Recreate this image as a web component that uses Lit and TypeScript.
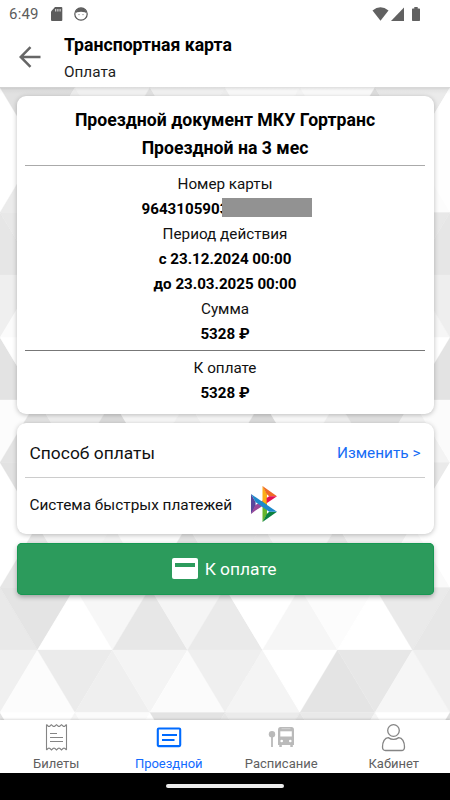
import { LitElement, html, svg, css } from "lit";
import { customElement, property } from "lit/decorators.js";

// Width, height and vertical phase of the triangle mesh.
const STEP = 75;
const ROW = 62.5;
const TOP = 87.5;

// Each row alternates pointing-up and pointing-down triangles, left to right.
const MESH: string[][] = [
  "fff e1e1e1 f0f0f0 f5f5f5 e4e4e4 f4f4f4 f1f1f1 fcfcfc f8f8f8 fdfdfd e0e0e0 ebebeb fff".split(" "),
  "fff ebebeb fff f4f4f4 eee fff eee fff f4f4f4 eee fff fcfcfc fefefe".split(" "),
  "e6e6e6 e8e8e8 eee eee eee eee eee eee eee eee eee e8e8e8 e6e6e6".split(" "),
  "efefef fbfbfb eee eee eee eee eee eee eee eee eee f6f6f6 eee".split(" "),
  "e3e3e3 fff eee eee eee eee eee eee eee eee eee fff e3e3e3".split(" "),
  "fcfcfc e4e4e4 efefef dcdcdc f8f8f8 f2f2f2 f7f7f7 dcdcdc fbfbfb f0f0f0 e2e2e2 f3f3f3 fbfbfb".split(" "),
  "fff e2e2e2 eee eee eee eee eee eee eee eee eee eaeaea fff".split(" "),
  "fff e7e7e7 f5f5f5 f2f2f2 fcfcfc e2e2e2 ebebeb ebebeb f4f4f4 e6e6e6 f0f0f0 fafafa fff".split(" "),
  "e9e9e9 e4e4e4 fff f7f7f7 e7e7e7 f5f5f5 eaeaea fff f6f6f6 fcfcfc fff eaeaea e7e7e7".split(" "),
  "f0f0f0 fcfcfc ebebeb efefef f4f4f4 fbfbfb efefef f4f4f4 fff e4e4e4 e7e7e7 f6f6f6 efefef".split(" "),
  "e2e2e2 fff f5f5f5 fbfbfb fff e3e3e3 e6e6e6 ebebeb e3e3e3 e9e9e9 f5f5f5 fff dedede".split(" "),
];

@customElement("mesh-background")
export class MeshBackground extends LitElement {
  static styles = css`
    :host { display: block; }
    svg { display: block; width: 450px; height: 633px; }
  `;
  render() {
    return html`<svg viewBox="0 87 450 633" preserveAspectRatio="none">
      ${MESH.map((row, r) =>
        row.map((c, i) => {
          const x = (i * STEP) / 2;
          const y = TOP + r * ROW;
          const up = (i + r) % 2 === 0;
          const h = STEP / 2;
          const pts = up
            ? `${x},${y} ${x + h},${y + ROW} ${x - h},${y + ROW}`
            : `${x - h},${y} ${x + h},${y} ${x},${y + ROW}`;
          return svg`<polygon points=${pts} fill="#${c}" stroke="#${c}" stroke-width="0.3"/>`;
        })
      )}
    </svg>`;
  }
}

@customElement("status-bar")
export class StatusBar extends LitElement {
  static styles = css`
    :host { display: flex; align-items: center; height: 27px; padding: 0 30px 0 9px; color: #5c5c5c; font: 400 15px/27px Roboto, sans-serif; }
    .time { width: 42px; padding-top: 1px; letter-spacing: 0.2px; }
    .gap { flex: 1; }
    svg { display: block; }
    .face { margin-left: 11px; }
    .signal { margin-left: 2px; }
    .battery { margin-left: 8px; }
  `;
  render() {
    return html`
      <span class="time">6:49</span>
      <svg width="12" height="14" viewBox="0 0 12 14"><path d="M4 0H10.3Q11.3 0 11.3 1V13Q11.3 14 10.3 14H1Q0 14 0 13V4.4Z" fill="#5c5c5c"/><path d="M4.7 2v2.5M6.9 2v2.5M9.1 2v2.5" stroke="#ddd" stroke-width="1.1"/></svg>
      <svg class="face" width="14" height="14" viewBox="0 0 14 14"><circle cx="7" cy="7" r="6.2" fill="none" stroke="#555" stroke-width="1.2"/><path d="M1.5 6.3Q2.2 1 7 1T12.5 6.3L10.8 5.2 7 4.7 3.2 5.2Z" fill="#606060"/><circle cx="5" cy="7.6" r=".6" fill="#777"/><circle cx="9" cy="7.6" r=".6" fill="#777"/></svg>
      <span class="gap"></span>
      <svg width="17" height="14" viewBox="0 0 17 14"><path d="M.5 3.5Q8.5-3.2 16.5 3.5L8.5 13.7Z" fill="#616161"/></svg>
      <svg class="signal" width="13" height="14" viewBox="0 0 13 14"><path d="M13 .5V14H0Z" fill="#616161"/></svg>
      <svg class="battery" width="8" height="14" viewBox="0 0 8 14"><path d="M2.3 0H5.7V1.4H7.3Q8 1.4 8 2.2V13.2Q8 14 7.3 14H.7Q0 14 0 13.2V2.2Q0 1.4.7 1.4H2.3Z" fill="#616161"/></svg>
    `;
  }
}

const ICONS = {
  tickets: svg`<g fill="none" stroke="#858585" stroke-width="1.1"><path d="M3.5 1.5V27M23.5 1.5V27M3.5 1.5L5 3Q6 4 7 3L8.3 1.7L9.8 3Q11 4 12 3L13.5 1.7L15 3Q16 4 17 3L18.5 1.7L20 3Q21 4 22 3L23.5 1.5M3.5 27L5 25.5Q6 24.7 7 25.5L8.5 27L10 25.5Q11 24.7 12 25.5L13.5 27L15 25.5Q16 24.7 17 25.5L18.5 27L20 25.5Q21 24.7 22 25.5L23.5 27"/><path d="M7 10.5h7M7 14.5h13M7 18.5h13"/></g>`,
  pass: svg`<rect x="2.8" y="5.500" width="22.400" height="17.600" rx="1" fill="none" stroke="#006bff" stroke-width="2.1"/><path d="M7 12h15M7 17h12.500" stroke="#006bff" stroke-width="2"/>`,
  schedule: svg`<g fill="#bababa"><circle cx="4" cy="11.3" r="3.2"/><path d="M3.1 12h1.8v12H3.1zM12.500 4h11q2.500 0 2.500 3v15h-1.200v2h-2.500v-2h-8.500v2h-2.500v-2H10V7q0-3 2.500-3z"/></g><path d="M12.300 8.300h11.500v5.200H12.300z" fill="#fff"/><circle cx="13.700" cy="18" r="1.300" fill="#fff"/><circle cx="22.300" cy="18" r="1.300" fill="#fff"/><path d="M13.500 5.700h9" stroke="#ddd" stroke-width=".7"/>`,
  cabinet: svg`<g fill="none" stroke="#858585" stroke-width="1.300"><circle cx="13.500" cy="7.500" r="5.800"/><path d="M8.200 14.600Q13.500 18.300 18.800 14.600C22.200 14.600 24.500 19 24.500 24Q24.500 27.500 21.500 27.500H5.500Q2.500 27.500 2.500 24C2.500 19 4.800 14.600 8.200 14.600Z"/></g>`,
};

@customElement("tab-item")
export class TabItem extends LitElement {
  @property() label = "";
  @property() icon: keyof typeof ICONS = "tickets";
  @property({ type: Boolean }) active = false;
  static styles = css`
    :host { display: flex; flex: 1; flex-direction: column; align-items: center; padding-top: 3px; color: #606060; font: 400 13px/18px Roboto, sans-serif; }
    :host([active]) { color: #126bff; }
    svg { display: block; width: 27px; height: 29px; margin-bottom: 3px; }
  `;
  render() {
    return html`<svg viewBox="0 0 27 29">${ICONS[this.icon]}</svg><span>${this.label}</span>`;
  }
}

@customElement("app-root")
export class AppRoot extends LitElement {
  static styles = css`
    :host { display: flex; flex-direction: column; width: 450px; height: 800px; overflow: hidden; background: #fff; color: #111; font-family: Roboto, sans-serif; }
    .bar { display: flex; height: 60px; flex: none; }
    .back { display: block; width: 22px; height: 22px; margin: 19px 23px 0 19px; }
    .heads { padding-top: 7px; }
    .title { font-size: 17.650px; line-height: 22px; font-weight: 700; color: #000; white-space: nowrap; }
    .sub { font-size: 15.300px; line-height: 20px; margin-top: 6px; color: #1c1c1c; }
    .body { position: relative; flex: none; height: 633px; overflow: hidden; }
    .mesh { position: absolute; inset: 0; }
    .edge { position: absolute; inset: 0 0 auto; height: 7px; background: linear-gradient(rgba(0,0,0,.12), rgba(0,0,0,.03) 45%, transparent); }
    .content { position: relative; padding: 9px 16.500px; }
    .card { background: #fff; border-radius: 9px; box-shadow: 0 1px 5px rgba(0,0,0,.25); padding: 0 8.500px; text-align: center; }
    .doc { height: 317.500px; padding-top: 10px; box-sizing: border-box; }
    .doc h1 { margin: 0; font-size: 17.650px; line-height: 28px; font-weight: 700; color: #000; }
    .line { height: 1px; background: #aaa; }
    .line.first { margin: 3px 0 6px; }
    .line.dark { background: #777; margin: 3px 0 5px; }
    .row { font-size: 15.250px; line-height: 25px; height: 25px; }
    .row.b { font-size: 15.150px; font-weight: 700; color: #000; }
    .number { display: flex; align-items: center; justify-content: center; padding-left: 4px; }
    .mask { width: 90px; height: 19px; margin-left: -6px; background: #929292; z-index: 1; margin-top: -4px; }
    .pay { height: 111px; margin-top: 9px; text-align: left; }
    .method { display: flex; align-items: center; justify-content: space-between; height: 54px; padding: 6px 4.500px 0 4.500px; box-sizing: border-box; font-size: 17.400px; }
    .change { font-size: 15.350px; color: #166cf5; }
    .line.soft { background: #ccc; }
    .sbp { display: flex; align-items: center; height: 54px; padding-left: 4.500px; font-size: 15.350px; }
    .sbp svg { width: 26px; height: 36px; margin-left: 18.500px; margin-top: -2px; }
    .button { display: flex; align-items: center; justify-content: center; height: 52px; margin-top: 9px; padding-right: 2px; background: #2c9b5c; color: #fff; font-size: 17.400px; border-radius: 5px; box-shadow: inset 0 0 0 1px #179852, 0 2px 5px rgba(0,0,0,.3); }
    .button svg { width: 26px; height: 21px; margin-right: 7px; }
    .tabs { display: flex; height: 53px; flex: none; background: #fff; box-shadow: 0 -1px 2px rgba(0,0,0,.13); position: relative; }
    .system { flex: 1; background: #000; display: flex; justify-content: center; padding-top: 11px; }
    .handle { width: 118px; height: 4px; border-radius: 2px; background: #ececec; }
  `;
  render() {
    return html`
      <status-bar></status-bar>
      <div class="bar">
        <svg class="back" viewBox="0 0 22 22"><path d="M21.500 11H2M11.500 1.200L1.700 11L11.500 20.800" fill="none" stroke="#666" stroke-width="2.500"/></svg>
        <div class="heads">
          <div class="title">Транспортная карта</div>
          <div class="sub">Оплата</div>
        </div>
      </div>
      <div class="body">
        <mesh-background class="mesh"></mesh-background>
        <div class="edge"></div>
        <div class="content">
          <div class="card doc">
            <h1>Проездной документ МКУ Гортранс</h1>
            <h1>Проездной на 3 мес</h1>
            <div class="line first"></div>
            <div class="row">Номер карты</div>
            <div class="row b number"><span>9643105903</span><span class="mask"></span></div>
            <div class="row">Период действия</div>
            <div class="row b">с 23.12.2024 00:00</div>
            <div class="row b">до 23.03.2025 00:00</div>
            <div class="row">Сумма</div>
            <div class="row b">5328 ₽</div>
            <div class="line dark"></div>
            <div class="row">К оплате</div>
            <div class="row b">5328 ₽</div>
          </div>
          <div class="card pay">
            <div class="method"><span>Способ оплаты</span><span class="change">Изменить &gt;</span></div>
            <div class="line soft"></div>
            <div class="sbp">
              <span>Система быстрых платежей</span>
              <svg viewBox="0 0 26 36">
                <path d="M0 8V28L4.600 20V16Z" fill="#59459b"/>
                <path d="M11.500 14.500L15.700 17.200 4.500 24.600 0 28 4.200 19.200Z" fill="#994899"/>
                <path d="M11.500 0L16 8V23L11.500 20Z" fill="#fbae17"/>
                <path d="M11.500 0L26 10.300H18.200L15.600 8Z" fill="#ef6a25"/>
                <path d="M26 10.300L15.600 17.200V11.900L18.200 10.300Z" fill="#e30f52"/>
                <path d="M11.500 15.500L16 18.500V28L11.500 36Z" fill="#67b52c"/>
                <path d="M11.500 36L26 25.800H18.200L15.600 28.300Z" fill="#0b8140"/>
                <path d="M0 8L26 25.800H18.200L4.500 16Z" fill="#1e88cb"/>
              </svg>
            </div>
          </div>
          <div class="button">
            <svg viewBox="0 0 26 21"><rect width="26" height="21" rx="2" fill="#fff"/><path d="M3 5h20v4H3z" fill="#2c9b5c"/></svg>
            <span>К оплате</span>
          </div>
        </div>
      </div>
      <div class="tabs">
        <tab-item icon="tickets" label="Билеты"></tab-item>
        <tab-item icon="pass" label="Проездной" active></tab-item>
        <tab-item icon="schedule" label="Расписание"></tab-item>
        <tab-item icon="cabinet" label="Кабинет"></tab-item>
      </div>
      <div class="system"><div class="handle"></div></div>
    `;
  }
}
